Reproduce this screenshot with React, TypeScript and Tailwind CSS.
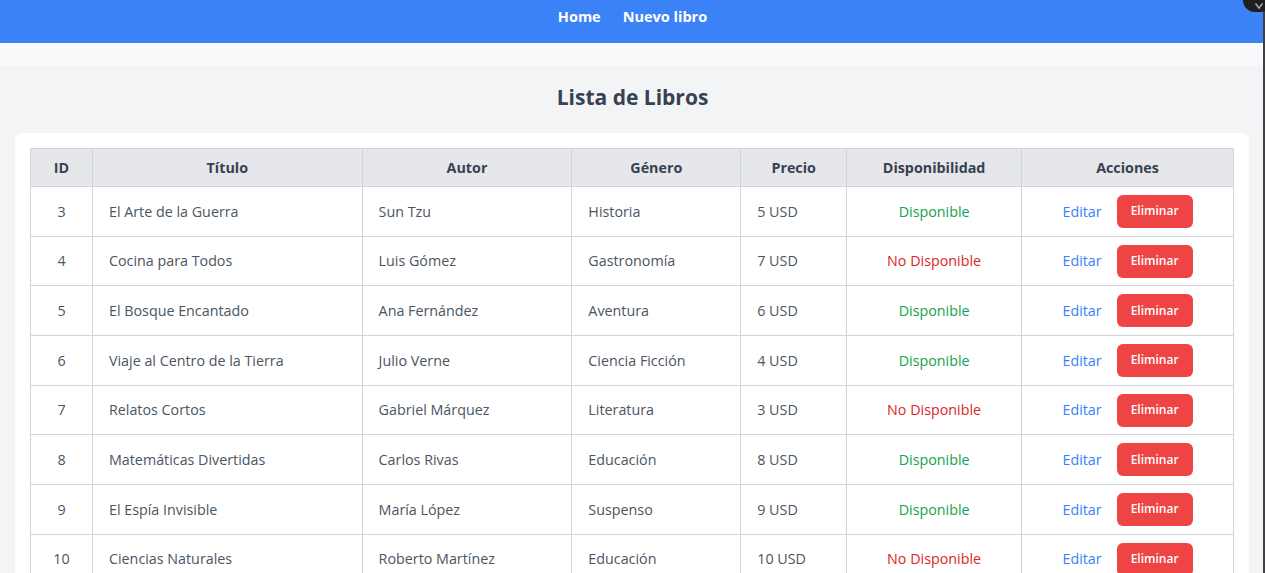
import React from "react";

type Book = { id: number; titulo: string; autor: string; genero: string; precio: string; disp: boolean };

const books: Book[] = [
  { id: 3, titulo: "El Arte de la Guerra", autor: "Sun Tzu", genero: "Historia", precio: "5 USD", disp: true },
  { id: 4, titulo: "Cocina para Todos", autor: "Luis Gómez", genero: "Gastronomía", precio: "7 USD", disp: false },
  { id: 5, titulo: "El Bosque Encantado", autor: "Ana Fernández", genero: "Aventura", precio: "6 USD", disp: true },
  { id: 6, titulo: "Viaje al Centro de la Tierra", autor: "Julio Verne", genero: "Ciencia Ficción", precio: "4 USD", disp: true },
  { id: 7, titulo: "Relatos Cortos", autor: "Gabriel Márquez", genero: "Literatura", precio: "3 USD", disp: false },
  { id: 8, titulo: "Matemáticas Divertidas", autor: "Carlos Rivas", genero: "Educación", precio: "8 USD", disp: true },
  { id: 9, titulo: "El Espía Invisible", autor: "María López", genero: "Suspenso", precio: "9 USD", disp: true },
  { id: 10, titulo: "Ciencias Naturales", autor: "Roberto Martínez", genero: "Educación", precio: "10 USD", disp: false },
];

export default function App() {
  return (
    <div
      className="relative h-[573px] w-[1265px] overflow-hidden bg-[#f3f4f6] text-[#374151]"
      style={{ fontFamily: '"Open Sans", "Noto Sans", Arial, sans-serif' }}
    >
      <div className="absolute right-0 top-0 z-10 h-full w-[2px] bg-[#3f3f46]" />
      <div className="absolute right-[-8px] top-[-12px] z-20 flex h-[24px] w-[30px] items-end justify-start rounded-full bg-[#1f1f1f] pb-[3px] pl-[12px]">
        <svg width="8" height="6" viewBox="0 0 8 6">
          <path d="M0.5 0.5 L4 5 L7.5 0.5" stroke="#9ca3af" strokeWidth="1.6" fill="none" />
        </svg>
      </div>
      <nav className="flex h-[43px] items-start justify-center gap-[22px] bg-[#3b82f6] pt-[6px] text-[14.5px] font-bold text-white">
        <a className="leading-[22px]">Home</a>
        <a className="leading-[22px]">Nuevo libro</a>
      </nav>
      <div className="h-[22px] bg-[#f9fafb]" />
      <h1 className="mt-[18px] text-center text-[21px] font-bold leading-[28px] text-[#374151]">Lista de Libros</h1>
      <div className="ml-[15px] mr-[16px] mt-[22px] rounded-lg bg-white p-[15px]">
        <table className="w-full border-collapse text-[14.3px]">
          <colgroup>
            <col className="w-[62px]" />
            <col className="w-[270px]" />
            <col className="w-[210px]" />
            <col className="w-[169px]" />
            <col className="w-[106px]" />
            <col className="w-[175px]" />
            <col className="w-[212px]" />
          </colgroup>
          <thead>
            <tr className="bg-[#e5e7eb] text-[#374151]">
              {["ID", "Título", "Autor", "Género", "Precio", "Disponibilidad", "Acciones"].map((h) => (
                <th key={h} className="h-[38px] border border-[#d1d5db] px-4 py-0 text-center font-bold leading-[22px]">
                  {h}
                </th>
              ))}
            </tr>
          </thead>
          <tbody>
            {books.map((b) => (
              <tr key={b.id} className="text-[#4b5563]">
                <td className="h-[49.7px] border border-[#d1d5db] px-2 text-center">{b.id}</td>
                <td className="border border-[#d1d5db] px-4">{b.titulo}</td>
                <td className="border border-[#d1d5db] px-4">{b.autor}</td>
                <td className="border border-[#d1d5db] px-4">{b.genero}</td>
                <td className="border border-[#d1d5db] px-4">{b.precio}</td>
                <td className={`border border-[#d1d5db] px-4 text-center ${b.disp ? "text-[#16a34a]" : "text-[#dc2626]"}`}>
                  {b.disp ? "Disponible" : "No Disponible"}
                </td>
                <td className="border border-[#d1d5db] px-4">
                  <div className="flex items-center justify-center gap-[15px]">
                    <a className="text-[#3b82f6]">Editar</a>
                    <button className="h-[33px] w-[76px] rounded-md bg-[#ef4444] text-[12px] font-semibold text-white">
                      Eliminar
                    </button>
                  </div>
                </td>
              </tr>
            ))}
          </tbody>
        </table>
      </div>
    </div>
  );
}
